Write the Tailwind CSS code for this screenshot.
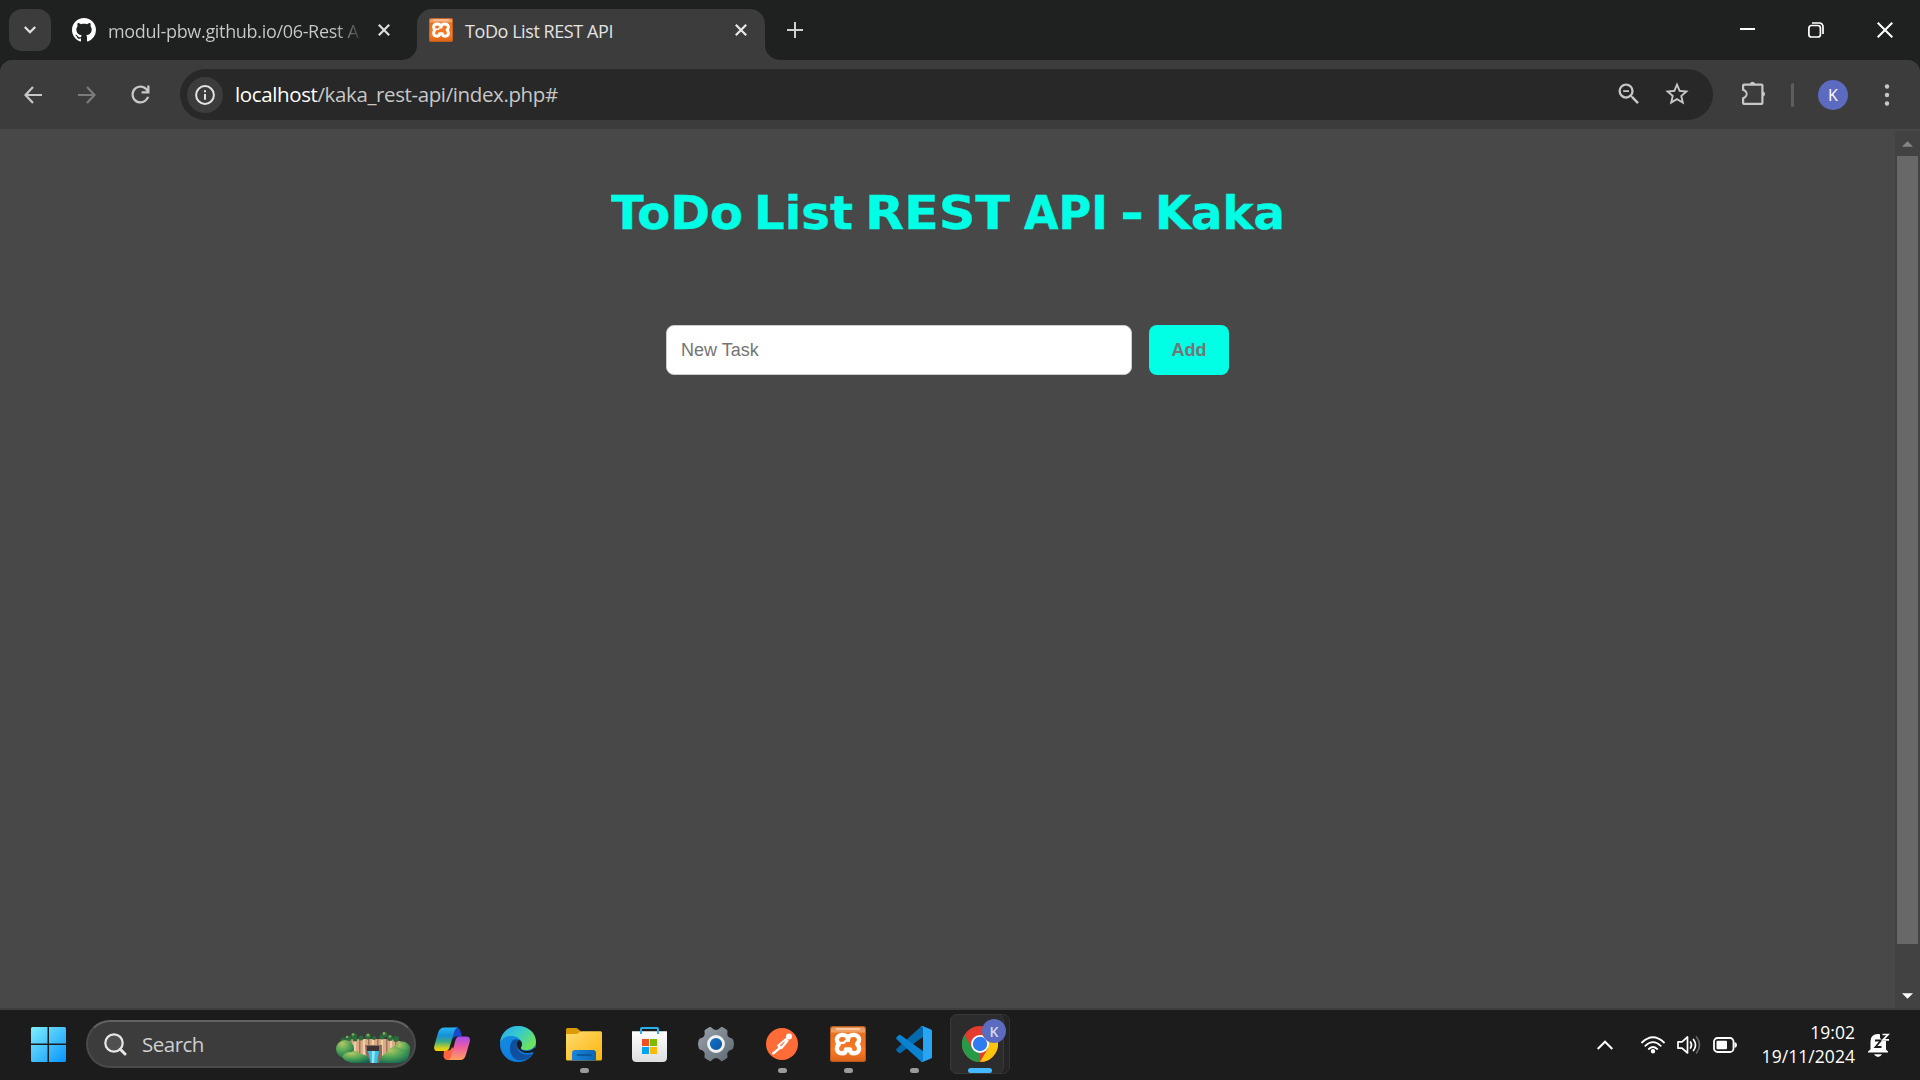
<!DOCTYPE html>
<html lang="en">
<head>
<meta charset="utf-8">
<title>ToDo List REST API</title>
<script src="https://cdn.jsdelivr.net/npm/@tailwindcss/browser@4"></script>
</head>
<body class="flex h-[1080px] w-[1920px] flex-col overflow-hidden bg-[#1f2120] font-['Open_Sans',sans-serif]">

<svg class="absolute h-0 w-0" aria-hidden="true">
  <defs>
    <linearGradient id="xo" x1="0" y1="0" x2="0" y2="1"><stop offset="0" stop-color="#e08a4c"/><stop offset=".12" stop-color="#f2a468"/><stop offset=".2" stop-color="#e86f1d"/><stop offset=".7" stop-color="#fb7a24"/><stop offset="1" stop-color="#d9641a"/></linearGradient>
    <symbol id="xampp" viewBox="0 0 36 36">
      <rect width="36" height="36" rx="2.5" fill="#b85a1b"/>
      <rect x="1" y="1" width="34" height="34" rx="2" fill="url(#xo)"/>
      <path d="M5 2.2H31L29 3.8H7Z" fill="#ffd9bd"/>
      <path d="M18 13.200C17.600 10.600 15.500 8.900 12.300 8.900C9 8.900 6.900 11 6.900 13.600C6.900 15.600 7.700 16.900 9 18C7.600 19.200 6.900 20.700 6.900 22.500C6.900 25.600 9 27.300 12 27.300C15 27.300 16 25.700 16 23.400H20C20 25.700 21.200 27.300 24 27.300C27 27.300 29.100 25.600 29.100 22.500C29.100 20.700 28.400 19.200 27 18C28.300 16.900 29.100 15.600 29.100 13.600C29.100 11 27 8.900 23.700 8.900C20.500 8.900 18.400 10.600 18 13.200Z" fill="none" stroke="#fff" stroke-width="4.400" stroke-linejoin="round"/>
      <path d="M10 16.800H13.800L16 14.600H20" fill="none" stroke="#fff" stroke-width="2.200"/>
    </symbol>
    <linearGradient id="win" x1="0" y1="0" x2="1" y2="1"><stop stop-color="#7deeff"/><stop offset=".5" stop-color="#45c1fb"/><stop offset="1" stop-color="#0693ff"/></linearGradient>
    <linearGradient id="cpa" x1="0" y1="0" x2="0" y2="1"><stop stop-color="#25b5f0"/><stop offset=".35" stop-color="#158fd8"/><stop offset=".6" stop-color="#3ca986"/><stop offset=".85" stop-color="#c5cf2c"/><stop offset="1" stop-color="#ffd200"/></linearGradient>
    <linearGradient id="cpb" x1="0" y1="0" x2="0" y2="1"><stop stop-color="#a54cf0"/><stop offset=".45" stop-color="#ee5da0"/><stop offset="1" stop-color="#ffa05e"/></linearGradient>
    <linearGradient id="edt" x1="0" y1="0" x2="1" y2=".6"><stop stop-color="#2ba5f0"/><stop offset=".5" stop-color="#35c9cf"/><stop offset="1" stop-color="#6ee45a"/></linearGradient>
    <linearGradient id="edb" x1="0" y1="0" x2=".4" y2="1"><stop stop-color="#1a8fdf"/><stop offset="1" stop-color="#0a7de0"/></linearGradient>
    <linearGradient id="fo" x1="0" y1="0" x2="1" y2="1"><stop stop-color="#ffdc6e"/><stop offset="1" stop-color="#fbb40e"/></linearGradient>
    <linearGradient id="fb" x1="0" y1="0" x2="1" y2="0"><stop stop-color="#1a86dc"/><stop offset="1" stop-color="#0a66b4"/></linearGradient>
    <linearGradient id="bag" x1="0" y1="0" x2="0" y2="1"><stop stop-color="#fff"/><stop offset="1" stop-color="#dedede"/></linearGradient>
    <linearGradient id="gr" x1="0" y1="0" x2="1" y2="1"><stop stop-color="#9aa2aa"/><stop offset="1" stop-color="#5d6872"/></linearGradient>
    <linearGradient id="gb" x1="0" y1="0" x2="1" y2="1"><stop stop-color="#1779d2"/><stop offset="1" stop-color="#0b4f97"/></linearGradient>
    <radialGradient id="bu" cx=".35" cy=".2" r=".9"><stop stop-color="#b4c763"/><stop offset=".5" stop-color="#4da355"/><stop offset="1" stop-color="#12624f"/></radialGradient>
    <pattern id="rock" width="9" height="20" patternUnits="userSpaceOnUse"><rect width="9" height="20" fill="#d9ab83"/><rect width="2" height="20" fill="#efcda6"/><rect x="5" width="1.500" height="20" fill="#9f7461"/></pattern>
  </defs>
</svg>

<!-- tab strip -->
<header class="flex h-[60px] shrink-0 items-end">
  <button class="mb-[9px] ml-[9px] flex h-[42px] w-[42px] items-center justify-center rounded-[13px] bg-[#3c3c3c]">
    <svg class="h-3 w-3" viewBox="0 0 12 12" fill="none" stroke="#e3e3e3" stroke-width="2.200"><path d="M.8 3L6 8.200L11.200 3"/></svg>
  </button>
  <div class="flex h-[51px] w-[351px] items-start pl-[21px]">
    <svg class="mt-[9px] h-6 w-6 shrink-0" viewBox="0 0 16 16" fill="#fff"><path d="M8 0C3.580 0 0 3.580 0 8c0 3.540 2.290 6.530 5.470 7.590.4.070.55-.17.55-.38 0-.19-.01-.82-.01-1.490-2.010.37-2.530-.49-2.690-.94-.09-.23-.48-.94-.82-1.130-.28-.15-.68-.52-.01-.53.63-.01 1.080.58 1.230.82.72 1.210 1.870.87 2.330.66.070-.52.28-.87.51-1.070-1.780-.2-3.640-.89-3.640-3.950 0-.87.31-1.590.82-2.150-.08-.2-.36-1.020.080-2.120 0 0 .67-.21 2.200.82.64-.18 1.320-.27 2-.27.68 0 1.360.090 2 .27 1.530-1.040 2.200-.82 2.200-.82.44 1.100.16 1.920.080 2.120.51.56.82 1.270.82 2.150 0 3.070-1.870 3.750-3.650 3.950.29.25.54.73.54 1.480 0 1.070-.01 1.930-.01 2.200 0 .21.15.46.55.38A8.013 8.013 0 0016 8c0-4.420-3.580-8-8-8z"/></svg>
    <span class="mt-[9px] ml-3 w-[252px] bg-linear-to-r from-[#c9cac9] from-90% to-[#3a3b3a] bg-clip-text text-[18px] leading-[27px] tracking-[-0.32px] whitespace-nowrap text-transparent">modul-pbw.github.io/06-Rest A</span>
    <svg class="mt-[15px] ml-[18px] h-3 w-3 shrink-0" viewBox="0 0 12 12" stroke="#dedede" stroke-width="2.200"><path d="M.8.8L11.200 11.200M11.200.8L.8 11.200"/></svg>
  </div>
  <div class="flex h-[51px] items-end">
    <svg class="h-[15px] w-[15px]" viewBox="0 0 15 15"><path d="M15 0V15H0A15 15 0 0 0 15 0Z" fill="#3c3c3c"/></svg>
    <div class="flex h-[51px] w-[348px] items-start rounded-t-[15px] bg-[#3c3c3c] pl-3">
      <svg class="mt-[9px] h-6 w-6"><use href="#xampp"/></svg>
      <span class="mt-[9px] ml-3 w-[250px] text-[18px] leading-[27px] tracking-[-0.43px] text-[#e3e3e3]">ToDo List REST API</span>
      <svg class="mt-[15px] ml-[20px] h-3 w-3" viewBox="0 0 12 12" stroke="#e8e8e8" stroke-width="2.200"><path d="M.8.8L11.200 11.200M11.200.8L.8 11.200"/></svg>
    </div>
    <svg class="h-[15px] w-[15px]" viewBox="0 0 15 15"><path d="M0 0V15H15A15 15 0 0 1 0 0Z" fill="#3c3c3c"/></svg>
  </div>
  <svg class="mb-[22px] ml-[7px] h-4 w-4" viewBox="0 0 16 16" stroke="#d0d0d0" stroke-width="2"><path d="M0 8H16M8 0V16"/></svg>
  <div class="mr-[27px] mb-[22px] ml-auto flex items-center gap-[53px]">
    <svg class="h-4 w-4" viewBox="0 0 16 16" stroke="#fff" stroke-width="2"><path d="M1 7H16"/></svg>
    <svg class="h-4 w-4" viewBox="0 0 16 16" fill="none" stroke="#fff" stroke-width="1.700"><rect x=".9" y="3.500" width="11.500" height="11.500" rx="2.500"/><path d="M4 1H11.500A3.500 3.500 0 0 1 15 4.500V12"/></svg>
    <svg class="h-4 w-4" viewBox="0 0 16 16" stroke="#fff" stroke-width="2"><path d="M.7.7L15.300 15.300M15.300.7L.7 15.300"/></svg>
  </div>
</header>

<!-- toolbar -->
<nav class="flex h-[69px] shrink-0 items-center rounded-t-[12px] bg-[#3c3c3c] pl-6 pr-[30px]">
  <svg class="h-[18px] w-[18px]" viewBox="0 0 18 18" fill="none" stroke="#c7c7c7" stroke-width="2.200"><path d="M18 9H1.800M9 1L1.500 9L9 17"/></svg>
  <svg class="ml-9 h-[18px] w-[18px]" viewBox="0 0 18 18" fill="none" stroke="#7b7b7b" stroke-width="2.200"><path d="M0 9H16.200M9 1L16.500 9L9 17"/></svg>
  <svg class="ml-[31px] h-[27px] w-[27px]" viewBox="0 0 24 24" fill="#c7c7c7"><path d="M12 20c-2.230 0-4.130-.78-5.680-2.330C4.780 16.130 4 14.230 4 12s.78-4.130 2.320-5.670C7.870 4.780 9.770 4 12 4c1.150 0 2.250.24 3.300.71A7.700 7.700 0 0 1 18 6.750V4h2v7h-7V9h4.200a5.930 5.930 0 0 0-2.190-2.200A5.850 5.850 0 0 0 12 6c-1.670 0-3.080.58-4.250 1.750S6 10.330 6 12s.58 3.080 1.750 4.250S10.330 18 12 18c1.280 0 2.440-.37 3.470-1.100A5.870 5.870 0 0 0 17.650 14h2.100a7.760 7.760 0 0 1-2.850 4.330A7.830 7.830 0 0 1 12 20Z"/></svg>
  <div class="ml-[26px] flex h-[51px] w-[1533px] items-center rounded-full bg-[#282828] pr-[22px] pl-[7px]">
    <span class="flex h-9 w-9 items-center justify-center rounded-full bg-[#3c3c3c]">
      <svg class="h-5 w-5" viewBox="0 0 20 20" fill="none" stroke="#e3e3e3" stroke-width="2"><circle cx="10" cy="10" r="8.900"/><path d="M10 9V14.800M10 5.200V7.300"/></svg>
    </span>
    <span class="mb-[2px] ml-[12px] text-[20.500px] leading-[30px] tracking-[-0.38px] text-[#c7c7c7]"><span class="text-white">localhost</span>/kaka_rest-api/index.php#</span>
    <svg class="mb-px ml-auto h-7 w-7" viewBox="0 0 24 24" fill="#c7c7c7"><path d="M15.500 14h-.79l-.28-.27A6.471 6.471 0 0 0 16 9.500 6.500 6.500 0 1 0 9.500 16c1.610 0 3.090-.59 4.230-1.570l.27.28v.79l5 4.990L20.490 19l-4.990-5zm-6 0C7.010 14 5 11.990 5 9.500S7.010 5 9.500 5 14 7.010 14 9.500 11.990 14 9.500 14zM7 8.700h5v1.600H7z"/></svg>
    <svg class="mb-px ml-5 h-7 w-7" viewBox="0 0 24 24" fill="#c7c7c7"><path d="M22 9.240l-7.190-.62L12 2 9.190 8.630 2 9.240l5.460 4.730L5.820 21 12 17.270 18.180 21l-1.630-7.030L22 9.240zM12 15.400l-3.760 2.270 1-4.280-3.320-2.880 4.380-.38L12 6.100l1.710 4.040 4.380.38-3.320 2.880 1 4.280L12 15.400z"/></svg>
  </div>
  <svg class="mb-1 ml-[28px] h-[25px] w-[26px]" viewBox="0 0 26 25" fill="#c7c7c7"><path d="M8.800 3.500A3 3 0 0 1 14.200 3.500H20.500A2 2 0 0 1 22.500 5.500V11.400A3 3 0 0 1 22.500 16.600V23A2 2 0 0 1 20.500 25H3A2 2 0 0 1 1 23V17.500C6 16 6 12 1 10.500V5.500A2 2 0 0 1 3 3.500Z"/><path d="M3.200 5.700H20.300V22.800H3.200V19C7.800 16.500 7.800 11.500 3.200 9Z" fill="#3c3c3c"/></svg>
  <span class="ml-[24px] h-6 w-[3px] rounded-full bg-[#5e5e5e]"></span>
  <span class="ml-[24px] flex h-[30px] w-[30px] items-center justify-center rounded-full bg-[#5c6bc0] text-[16px] text-white">K</span>
  <svg class="ml-auto h-[22px] w-[6px]" viewBox="0 0 6 22" fill="#c7c7c7"><circle cx="3" cy="2.500" r="2.200"/><circle cx="3" cy="11" r="2.200"/><circle cx="3" cy="19.500" r="2.200"/></svg>
</nav>

<!-- page -->
<div class="flex h-[881px] shrink-0 border-b-2 border-[#3e3e3e] bg-[#484848]">
  <main class="flex flex-1 flex-col items-center pt-[55px]">
    <h1 class="h-[60px] w-[674px]">
      <svg class="h-[60px] w-[674px]" viewBox="611 184 674 60" fill="#00ffe5" stroke="#00ffe5" stroke-width=".4" font-family="DejaVu Sans" font-weight="700" font-size="45.500">
        <text x="611" y="229" textLength="132" lengthAdjust="spacingAndGlyphs">ToDo</text>
        <text x="754" y="229" textLength="99" lengthAdjust="spacingAndGlyphs">List</text>
        <text x="865" y="229" textLength="145" lengthAdjust="spacingAndGlyphs">REST</text>
        <text x="1024" y="229" textLength="84" lengthAdjust="spacingAndGlyphs">API</text>
        <text x="1120" y="229" textLength="24" lengthAdjust="spacingAndGlyphs">-</text>
        <text x="1155" y="229" textLength="130" lengthAdjust="spacingAndGlyphs">Kaka</text>
      </svg>
    </h1>
    <form class="mt-[81px] flex gap-[17px] font-['Liberation_Sans',Arial,sans-serif]">
      <input type="text" placeholder="New Task" class="h-[50px] w-[466px] rounded-[8px] border border-[#ccc] bg-white px-[14px] text-[18px] placeholder:text-[#757575]">
      <button type="button" class="h-[50px] w-[80px] rounded-[8px] bg-[#00ffe5] text-[18px] font-bold text-[#757575]">Add</button>
    </form>
  </main>
  <aside class="mt-[2px] flex w-[25px] flex-col items-center bg-[#424242]">
    <svg class="mt-[10px] h-[6px] w-[11px]" viewBox="0 0 12 6"><path d="M6 0L12 6H0Z" fill="#868686"/></svg>
    <div class="mt-[9px] h-[788px] w-[21px] bg-[#686868]"></div>
    <svg class="mt-[49px] h-[6px] w-[11px]" viewBox="0 0 12 6"><path d="M0 0H12L6 6Z" fill="#fff"/></svg>
  </aside>
</div>

<!-- taskbar -->
<footer class="flex h-[70px] shrink-0 items-start bg-[#1c1c1c] pl-[31px]">
  <svg class="mt-[17px] h-[35px] w-[35px]" viewBox="0 0 35 35" fill="url(#win)"><path d="M1.500 0H16.500V16.500H0V1.500A1.500 1.500 0 0 1 1.500 0ZM18 0H33.500A1.500 1.500 0 0 1 35 1.500V16.500H18ZM0 18H16.500V35H1.500A1.500 1.500 0 0 1 0 33.500ZM18 18H35V33.500A1.500 1.500 0 0 1 33.500 35H18Z"/></svg>
  <div class="mt-[10px] ml-[20px] flex h-[48px] w-[330px] items-center rounded-full border-2 border-[#4a4a4a] border-t-[#626262] bg-[#3c3c3c] pl-[16px]">
    <svg class="h-[23px] w-[23px]" viewBox="0 0 23 23" fill="none" stroke="#e6e6e6"><circle cx="10" cy="10" r="8.700" stroke-width="2.200" fill="#505050"/><path d="M16.300 16.300L21 21" stroke-width="3" stroke-linecap="round"/></svg>
    <span class="ml-[15px] text-[20.500px] leading-[30px] tracking-[-0.5px] text-[#cfcfcf]">Search</span>
    <svg class="mt-[8px] mr-[4px] ml-auto h-[32px] w-[74px]" viewBox="0 0 74 32">
      <path d="M6 10L16 7L58 7L68 11L62 24L46 30H28L10 20Z" fill="url(#rock)"/>
      <path d="M29 13H46V31H31Z" fill="#8b6a61"/><path d="M31 14H43V19H31Z" fill="#3c3333"/>
      <path d="M32 19H43L41 31H35Z" fill="#35c3e8"/><path d="M36 19H39L38 31H36Z" fill="#8fe6f5"/>
      <g fill="#2c6b3c"><circle cx="7" cy="8" r="2.500"/><circle cx="12" cy="6.500" r="3"/><circle cx="18" cy="4" r="3"/><circle cx="19" cy="7" r="2.500"/><circle cx="25" cy="6" r="2.500"/><circle cx="32" cy="4.500" r="3"/><circle cx="38" cy="6" r="2"/><circle cx="46" cy="5" r="2.500"/><circle cx="49" cy="2.500" r="2.500"/><circle cx="54" cy="6" r="3"/><circle cx="60" cy="7" r="3"/></g>
      <g fill="#83a953"><circle cx="17" cy="2.500" r="1.300"/><circle cx="32" cy="3" r="1.500"/><circle cx="48" cy="1.500" r="1.400"/><circle cx="54" cy="4.500" r="1.300"/><circle cx="11" cy="5" r="1.200"/></g>
      <circle cx="9" cy="17" r="9" fill="url(#bu)"/><circle cx="66" cy="18" r="8.500" fill="url(#bu)"/>
      <path d="M6 25Q8 20 15 20Q20 17 25 22Q34 23 34 31H20Q10 31 6 25Z" fill="url(#bu)"/>
      <path d="M43 31Q45 23 50 21Q54 13 62 16Q72 17 73 24Q71 31 62 31Z" fill="url(#bu)"/>
    </svg>
  </div>

  <div class="ml-[18px] flex">
    <!-- Copilot -->
    <div class="flex w-[66px] flex-col items-start pt-[16px]">
      <svg class="h-9 w-9" viewBox="0 0 36 36"><path d="M18 1.500H22Q25.500 1.500 26.500 5L28 10.500H23Q19.500 10.500 18.500 14Z" fill="#1947c8"/><path d="M10 24.500H14Q17 24.500 18 21L21.500 25L17 34H13.500Q10.500 34 9.500 30.500Z" fill="#ff6340"/><path d="M10.500 1.500H25Q21.500 1.500 20.500 5L15.500 21.500Q14.500 25 11 25H3.500Q-.8 25 .4 19.500L4 7Q5.500 1.500 10.500 1.500Z" fill="url(#cpa)"/><path d="M25.500 10.500H32Q37 10.500 35.700 16L32 28.500Q30.500 34 26 34H13Q16 34 17 30.500L21.500 14Q22.500 10.500 25.500 10.500Z" fill="url(#cpb)"/></svg>
    </div>
    <!-- Edge -->
    <div class="flex w-[66px] flex-col items-start pt-[16px]">
      <svg class="h-9 w-9" viewBox="0 0 36 36"><circle cx="18" cy="18" r="18" fill="url(#edb)"/><path d="M0 17C1 7 8 0 18 0C28 0 36 7 36 15.500C36 21 31.500 24 27 24C22.500 24 20 22.500 21 21C22.500 19 22.500 17.500 21.500 15.500C19 11 14 9.500 9.500 10C5 10.500 1.500 13 0 17Z" fill="url(#edt)"/><path d="M13 14C8.500 19 9 27.500 14 32C20 37 30 33 33.500 27C28 30 21 28.500 18.500 24.500C16 21 16 16.500 19 14Q16 12.500 13 14Z" fill="#104f9e"/><path d="M19 14C21.500 14.500 23 18 21 21.500C20 23.500 23 25 27 25C30 25 33 23.500 34.500 21.500L36.500 22L36 27H33.500C34 26 32 26 31 26.500C25 28 20.500 26 18 22.500C16 19.500 16.500 15.500 19 14Z" fill="#1c1c1c"/></svg>
    </div>
    <!-- File Explorer -->
    <div class="flex w-[66px] flex-col items-start pt-[16px]">
      <svg class="h-9 w-9" viewBox="0 0 36 36"><path d="M1.500 2H10Q11 2 12 3L15 5.500V12H0V3.500Q0 2 1.500 2Z" fill="#dc9b05"/><path d="M0 8H10Q11.500 8 12.500 7L14 5.800Q15 5.200 16 5.200H34.500Q36 5.200 36 6.700V33Q36 34.500 34.500 34.500H1.500Q0 34.500 0 33Z" fill="url(#fo)"/><path d="M6 34.500V27Q6 24 9 24H27Q30 24 30 27V34.500Z" fill="url(#fb)"/><path d="M11.500 29H25" stroke="#0b4f8c" stroke-width="1.600" stroke-linecap="round"/></svg>
      <span class="mt-[6px] ml-[14px] h-[5px] w-[9px] rounded-full bg-[#9b9b9b]"></span>
    </div>
    <!-- Microsoft Store -->
    <div class="flex w-[66px] flex-col items-start pt-[16px]">
      <svg class="h-9 w-9" viewBox="0 0 36 36"><path d="M0 5.200H35V31.500Q35 36 30.500 36H4.500Q0 36 0 31.500Z" fill="url(#bag)"/><path d="M9 8V2.800Q9 2 10 2H25Q26 2 26 2.800V8" fill="none" stroke="#2bb0ee" stroke-width="2"/><path d="M10 13H17V20H10Z" fill="#f25022"/><path d="M18 13H25V20H18Z" fill="#7fba00"/><path d="M10 21H17V28H10Z" fill="#00a4ef"/><path d="M18 21H25V28H18Z" fill="#ffb900"/></svg>
    </div>
    <!-- Settings -->
    <div class="flex w-[66px] flex-col items-start pt-[16px]">
      <svg class="h-9 w-9" viewBox="0 0 36 36"><path d="M11.500 1Q13 .5 14 2Q18 6 22 2Q23 .5 24.500 1L28.500 3.500Q30 4.500 29.500 6Q28 11 34 12.500Q35.500 13 36 18Q35.500 23 34 23.500Q28 25 29.500 30Q30 31.500 28.500 32.500L24.500 35Q23 35.500 22 34Q18 30 14 34Q13 35.500 11.500 35L7.500 32.500Q6 31.500 6.500 30Q8 25 2 23.500Q.5 23 0 18Q.5 13 2 12.500Q8 11 6.500 6Q6 4.500 7.500 3.500Z" fill="url(#gr)"/><circle cx="18" cy="18" r="7.500" fill="url(#gb)" stroke="#f1f1f1" stroke-width="2.800"/></svg>
    </div>
    <!-- Postman -->
    <div class="flex w-[66px] flex-col items-start pt-[16px]">
      <svg class="h-9 w-9" viewBox="0 0 36 36"><circle cx="18" cy="18" r="16" fill="#ff6c37"/><circle cx="25" cy="10.500" r="3" fill="#fff"/><path d="M23 12.500L14.500 19.500L16.500 21.500L8.500 28M24 14L17.500 22L14 21" fill="none" stroke="#fff" stroke-width="2.300"/><path d="M16 19.500L20.500 15.500" stroke="#ff6c37" stroke-width=".8"/></svg>
      <span class="mt-[6px] ml-[14px] h-[5px] w-[9px] rounded-full bg-[#9b9b9b]"></span>
    </div>
    <!-- XAMPP -->
    <div class="flex w-[66px] flex-col items-start pt-[16px]">
      <svg class="h-9 w-9"><use href="#xampp"/></svg>
      <span class="mt-[6px] ml-[14px] h-[5px] w-[9px] rounded-full bg-[#9b9b9b]"></span>
    </div>
    <!-- VS Code -->
    <div class="flex w-[66px] flex-col items-start pt-[16px]">
      <svg class="h-9 w-9" viewBox="0 0 36 36"><path d="M26.500 0L29 9.500L4.500 27Q3.500 27.500 2.500 26.700L.6 24.800Q-.4 23.800.6 22.800L24.500 1Q25.500 0 26.500 0Z" fill="#0569ad"/><path d="M26.500 36L29 26.500L4.500 9Q3.500 8.500 2.500 9.300L.6 11.200Q-.4 12.200.6 13.200L24.500 35Q25.500 36 26.500 36Z" fill="#0b82cf"/><path d="M26.500 0L35 3.500Q36 4 36 5V31Q36 32 35 32.500L26.500 36Q25.500 36 24.500 35Q27 36 27 33.500V2.500Q27 0 24.500 1Q25.500 0 26.500 0Z" fill="#27a5f2"/></svg>
      <span class="mt-[6px] ml-[14px] h-[5px] w-[9px] rounded-full bg-[#9b9b9b]"></span>
    </div>
    <!-- Chrome -->
    <div class="relative mt-1 -ml-3 h-[60px] w-[60px] rounded-[7px] border border-[#343434] bg-[#242424]">
      <div class="-mt-px -ml-px flex h-[60px] w-[54px] flex-col items-center rounded-[7px] border border-[#393939] bg-[#2c2c2c] pt-[11px]">
        <svg class="ml-[6px] h-9 w-9" viewBox="0 0 36 36"><circle cx="18" cy="18" r="18" fill="#e33b2e"/><path d="M2.400 9L10.200 22.500L18 27L18 36A18 18 0 0 1 2.400 9Z" fill="#269a47"/><path d="M33.600 9A18 18 0 0 1 18 36L25.800 22.500L18 9Z" fill="#fcc40c"/><circle cx="18" cy="18" r="9" fill="#fff"/><circle cx="18" cy="18" r="7.200" fill="#2f7cf2"/></svg>
        <span class="mt-[6px] ml-[6px] h-[5px] w-6 rounded-full bg-[#43b9ff]"></span>
      </div>
      <span class="absolute top-[4px] left-[31px] flex h-6 w-6 items-center justify-center rounded-full bg-[#5c6bc0] text-[14px] font-semibold text-[#d5d9ef]">K</span>
    </div>
  </div>

  <div class="mr-[30px] ml-auto flex h-[69px] items-center">
    <svg class="h-[10px] w-4" viewBox="0 0 16 10" fill="none" stroke="#fff" stroke-width="2"><path d="M.7 9L8 1.700L15.300 9"/></svg>
    <svg class="ml-[28px] h-[18px] w-6" viewBox="0 0 24 18" fill="none" stroke="#fff" stroke-width="1.800" stroke-linecap="round"><path d="M1 6.500Q12-4 23 6.500M4.300 9.800Q12 2.500 19.700 9.800M7.800 13Q12 9 16.200 13"/><circle cx="12" cy="15.300" r="1.300" fill="#fff"/></svg>
    <svg class="ml-[12px] h-5 w-6" viewBox="0 0 24 20" fill="none" stroke="#fff" stroke-width="1.700" stroke-linecap="round" stroke-linejoin="round"><path d="M1 6.800H5L10.500 2V18L5 13.200H1Z"/><path d="M13.500 7Q15.500 10 13.500 13M16.500 4.500Q20.500 10 16.500 15.500"/><path d="M19.500 2Q25.500 10 19.500 18" stroke="#666"/></svg>
    <svg class="ml-[12px] h-4 w-6" viewBox="0 0 24 16"><rect x="1" y="1" width="19.500" height="14" rx="3.500" fill="none" stroke="#fff" stroke-width="1.800"/><rect x="3.500" y="3.800" width="10.500" height="8.500" rx="1" fill="#fff"/><path d="M21.500 5Q24 5.500 24 8T21.500 11Z" fill="#fff"/></svg>
    <div class="mb-[2px] ml-[24px] w-[94px] text-right text-[17.500px] leading-6 tracking-[0.05px] whitespace-nowrap text-white"><div>19:02</div><div>19/11/2024</div></div>
    <svg class="ml-[13px] h-6 w-[22px]" viewBox="0 0 22 24"><path d="M2.500 16.500V8.500Q2.500 1 10 1Q18 1 18 8.500V16.500L20 18.500V19.500H0V18.500Z" fill="#fff"/><path d="M6 21.300H14Q12.500 24 10 24T6 21.300Z" fill="#fff"/><path d="M12 0H22V8H15L12 5Z" fill="#1c1c1c"/><path d="M7 7.500H13L7.500 14H13.500" fill="none" stroke="#1c1c1c" stroke-width="1.800"/><path d="M14.500 1.500H20L15 6.800H21" fill="none" stroke="#fff" stroke-width="1.700"/></svg>
  </div>
</footer>
</body>
</html>
